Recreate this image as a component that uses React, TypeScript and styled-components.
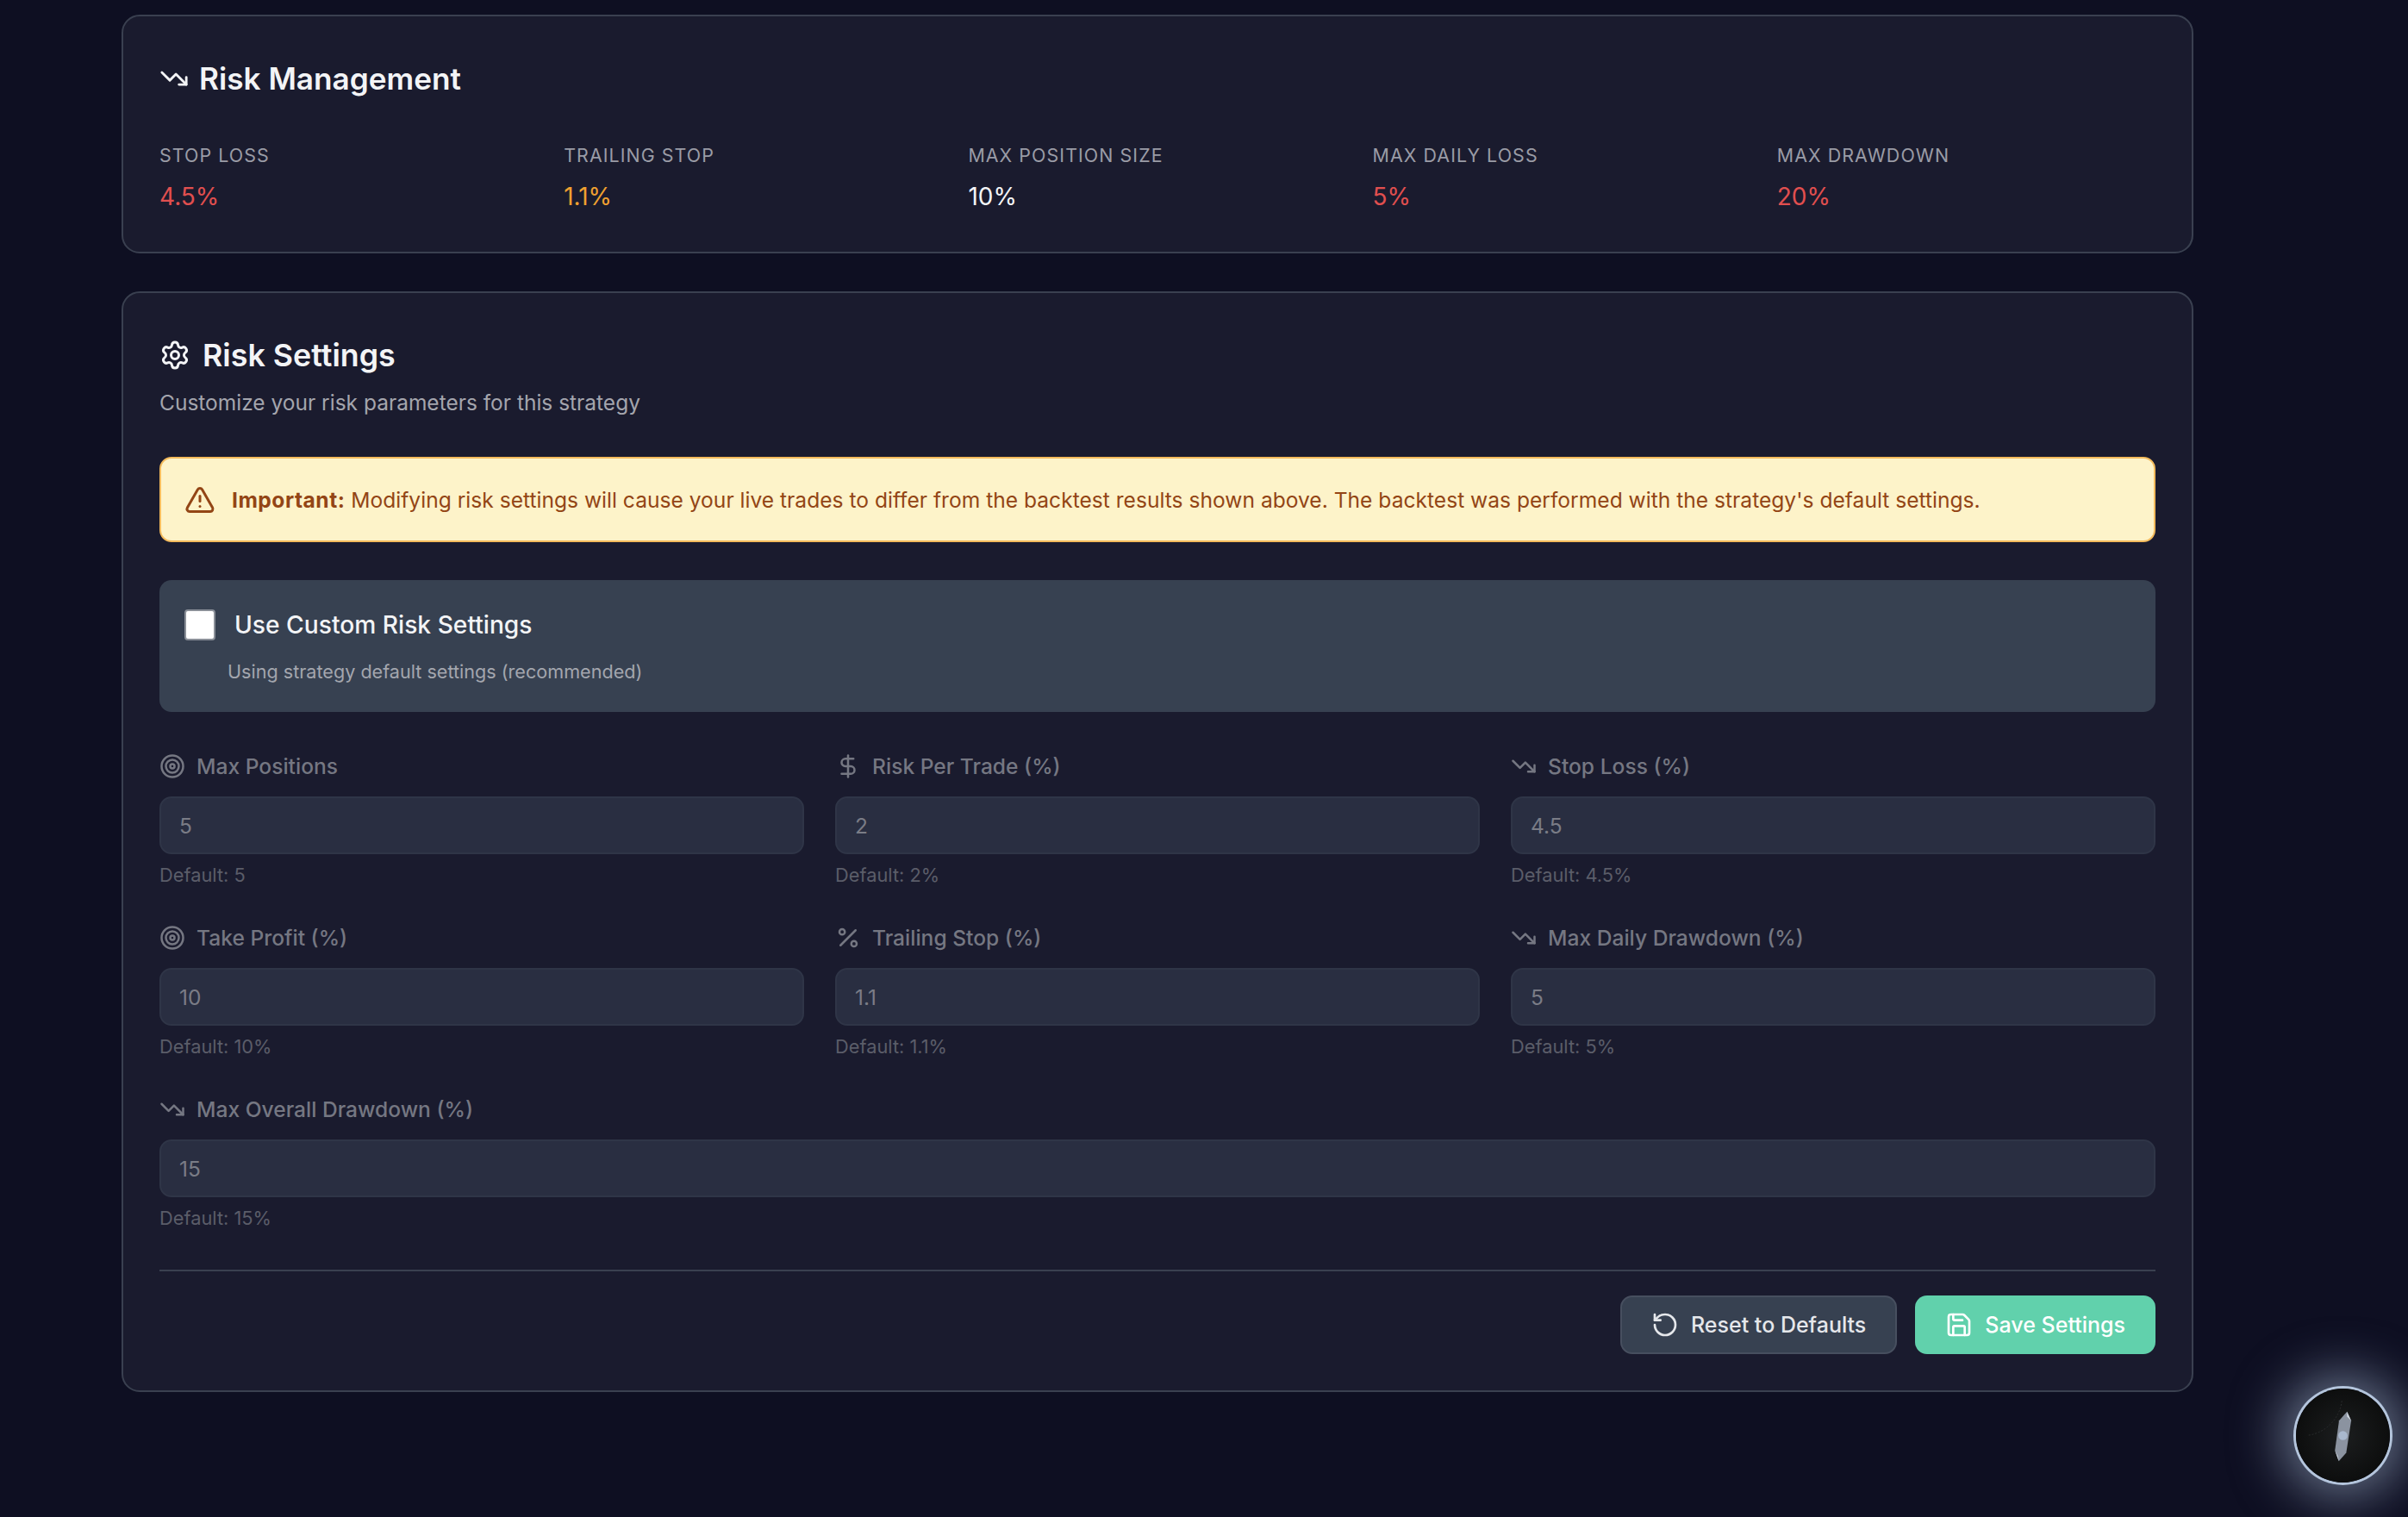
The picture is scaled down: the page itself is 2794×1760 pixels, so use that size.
import React from "react";
import styled, { createGlobalStyle } from "styled-components";
import {
  AlertTriangle,
  DollarSign,
  Percent,
  RotateCcw,
  Save,
  Settings,
  Target,
  TrendingDown,
} from "lucide-react";

const metrics = [
  { label: "Stop Loss", value: "4.5%", color: "#e14f4f" },
  { label: "Trailing Stop", value: "1.1%", color: "#f0a030" },
  { label: "Max Position Size", value: "10%", color: "#f3f4f6" },
  { label: "Max Daily Loss", value: "5%", color: "#e14f4f" },
  { label: "Max Drawdown", value: "20%", color: "#e14f4f" },
];

const fields = [
  { label: "Max Positions", value: "5", note: "Default: 5", Icon: Target },
  { label: "Risk Per Trade (%)", value: "2", note: "Default: 2%", Icon: DollarSign },
  { label: "Stop Loss (%)", value: "4.5", note: "Default: 4.5%", Icon: TrendingDown },
  { label: "Take Profit (%)", value: "10", note: "Default: 10%", Icon: Target },
  { label: "Trailing Stop (%)", value: "1.1", note: "Default: 1.1%", Icon: Percent },
  { label: "Max Daily Drawdown (%)", value: "5", note: "Default: 5%", Icon: TrendingDown },
  { label: "Max Overall Drawdown (%)", value: "15", note: "Default: 15%", Icon: TrendingDown, wide: true },
];

const App = () => {
  return (
    <Page>
      <GlobalStyle />
      <Card $bottom={46}>
        <Title>
          <TrendingDown size={34} strokeWidth={2} />
          Risk Management
        </Title>
        <Metrics>
          {metrics.map((m) => (
            <div key={m.label}>
              <MetricLabel>{m.label}</MetricLabel>
              <MetricValue $color={m.color}>{m.value}</MetricValue>
            </div>
          ))}
        </Metrics>
      </Card>

      <Card $bottom={42}>
        <Title $gap={14} $size={35.8}>
          <Settings size={36} strokeWidth={2} />
          Risk Settings
        </Title>
        <Subtitle>Customize your risk parameters for this strategy</Subtitle>

        <Alert>
          <AlertTriangle size={36} strokeWidth={2} />
          <span>
            <strong>Important:</strong> Modifying risk settings will cause your live trades to differ
            from the backtest results shown above. The backtest was performed with the strategy's
            default settings.
          </span>
        </Alert>

        <CustomBox>
          <CheckRow>
            <Checkbox type="checkbox" readOnly />
            Use Custom Risk Settings
          </CheckRow>
          <CheckHint>Using strategy default settings (recommended)</CheckHint>
        </CustomBox>

        <FieldGrid>
          {fields.map(({ label, value, note, Icon, wide }) => (
            <Field key={label} $wide={wide}>
              <FieldLabel>
                <Icon size={30} strokeWidth={2} />
                {label}
              </FieldLabel>
              <FieldInput value={value} disabled readOnly />
              <FieldNote>{note}</FieldNote>
            </Field>
          ))}
        </FieldGrid>

        <Footer>
          <ResetButton>
            <RotateCcw size={32} strokeWidth={2} />
            Reset to Defaults
          </ResetButton>
          <SaveButton>
            <Save size={32} strokeWidth={2} />
            Save Settings
          </SaveButton>
        </Footer>
      </Card>

      <Fab>
        <svg width="109" height="109" viewBox="0 0 114 114">
          <path d="M55.7 15 A 48 48 0 0 1 14.7 56.7" fill="none" stroke="#2c2e30" strokeWidth="1" strokeDasharray="2 2" />
          <polygon points="62,28 67,39 61,78 52,88 47.3,75 52.3,39" fill="#8b93a0" />
          <polygon points="62,28 67,39 62,34" fill="#cfd6df" />
          <polygon points="52,88 47.3,75 51,82" fill="#cfd6df" />
          <circle cx="57" cy="57" r="5.5" fill="#a9b8cd" />
        </svg>
      </Fab>
    </Page>
  );
};

export default App;

const GlobalStyle = createGlobalStyle`
  html, body {
    margin: 0;
    background: #0e0f22;
  }
  * {
    box-sizing: border-box;
  }
`;

const Page = styled.main`
  min-height: 100vh;
  padding: 17px 0 0 141px;
  display: flex;
  flex-direction: column;
  gap: 44px;
  font-family: Inter, "Liberation Sans", sans-serif;
  color: #f3f4f6;
`;

const Card = styled.section<{ $bottom: number }>`
  width: 2404px;
  padding: 42px 42px ${(p) => p.$bottom}px;
  background: #1a1b2e;
  border: 2px solid #3a4050;
  border-radius: 21px;
`;

const Title = styled.h2<{ $gap?: number; $size?: number }>`
  margin: 0;
  height: 60px;
  display: flex;
  align-items: center;
  gap: ${(p) => p.$gap ?? 12}px;
  font-size: ${(p) => p.$size ?? 35.2}px;
  font-weight: 600;
  color: #f3f4f6;
`;

const Metrics = styled.div`
  margin-top: 46px;
  display: grid;
  grid-template-columns: repeat(5, 1fr);
  column-gap: 30px;
`;

const MetricLabel = styled.div`
  height: 26px;
  line-height: 26px;
  font-size: 21.4px;
  letter-spacing: 1.07px;
  text-transform: uppercase;
  color: #9a9ca6;
`;

const MetricValue = styled.div<{ $color: string }>`
  margin-top: 17px;
  height: 36px;
  line-height: 36px;
  font-size: 28px;
  color: ${(p) => p.$color};
`;

const Subtitle = styled.p`
  margin: 10px 0 0;
  height: 30px;
  line-height: 30px;
  font-size: 24.5px;
  color: #a4a5ad;
`;

const Alert = styled.div`
  margin-top: 48px;
  height: 99px;
  padding: 0 27px;
  display: flex;
  align-items: center;
  gap: 19px;
  background: #fdf3c9;
  border: 2px solid #f4bb5c;
  border-radius: 14px;
  font-size: 24.6px;
  color: #934515;

  svg {
    flex-shrink: 0;
  }
  strong {
    font-weight: 700;
    letter-spacing: 0.5px;
  }
`;

const CustomBox = styled.div`
  margin-top: 44px;
  height: 153px;
  padding: 30px 29px 0;
  background: #374151;
  border-radius: 14px;
`;

const CheckRow = styled.label`
  height: 44px;
  display: flex;
  align-items: center;
  gap: 22px;
  font-size: 28.2px;
  font-weight: 500;
  color: #f3f4f6;
`;

const Checkbox = styled.input`
  appearance: none;
  margin: 0;
  width: 36px;
  height: 36px;
  background: #fff;
  border: 2px solid #8a8f98;
  border-radius: 4px;
`;

const CheckHint = styled.div`
  margin: 18px 0 0 50px;
  height: 28px;
  line-height: 28px;
  font-size: 21.6px;
  color: #a3a6ae;
`;

const FieldGrid = styled.div`
  margin-top: 45px;
  display: grid;
  grid-template-columns: repeat(3, 1fr);
  column-gap: 36px;
  row-gap: 43px;
`;

const Field = styled.div<{ $wide?: boolean }>`
  grid-column: ${(p) => (p.$wide ? "1 / -1" : "auto")};
`;

const FieldLabel = styled.label`
  height: 36px;
  display: flex;
  align-items: center;
  gap: 13px;
  font-size: 24.6px;
  font-weight: 500;
  color: #757782;
`;

const FieldInput = styled.input`
  display: block;
  width: 100%;
  height: 67px;
  margin-top: 17px;
  padding: 0 21px;
  background: #292e41;
  border: 2px solid #2f3547;
  border-radius: 14px;
  font-family: inherit;
  font-size: 24.5px;
  color: #7a7c86;
  outline: none;
`;

const FieldNote = styled.div`
  margin-top: 12px;
  height: 24px;
  line-height: 24px;
  font-size: 21.8px;
  color: #5b5d69;
`;

const Footer = styled.div`
  margin-top: 48px;
  padding-top: 28px;
  border-top: 2px solid #3a4050;
  display: flex;
  justify-content: flex-end;
  gap: 21px;
`;

const Button = styled.button`
  height: 68px;
  display: flex;
  align-items: center;
  gap: 14px;
  border-radius: 14px;
  font-family: inherit;
  font-size: 25px;
  font-weight: 500;
`;

const ResetButton = styled(Button)`
  padding: 0 34px;
  background: #374151;
  border: 2px solid #474f5f;
  color: #e5e7eb;
`;

const SaveButton = styled(Button)`
  padding: 0 35px;
  background: #61d1ac;
  border: 0;
  color: #fff;
`;

const Fab = styled.div`
  position: fixed;
  right: 21px;
  bottom: 40px;
  width: 109px;
  height: 109px;
  display: flex;
  align-items: center;
  justify-content: center;
  border-radius: 50%;
  background: radial-gradient(circle, #1c1e1f 0%, #0d0e0e 70%);
  box-shadow: 0 0 0 3px #b4c5dc, 0 0 60px 16px rgba(176, 196, 222, 0.55);
`;
